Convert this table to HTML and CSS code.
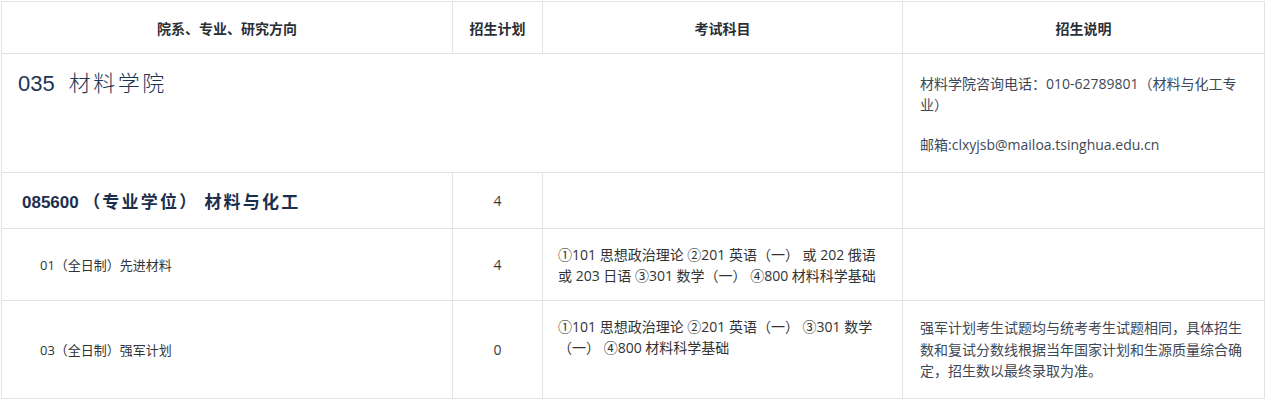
FILE: index.html
```html
<!DOCTYPE html>
<html lang="zh-CN">
<head>
<meta charset="utf-8">
<title>招生目录</title>
<link rel="stylesheet" href="styles.css">
</head>
<body>
<table class="catalog">
  <colgroup>
    <col class="c-name">
    <col class="c-plan">
    <col class="c-exam">
    <col class="c-note">
  </colgroup>
  <thead>
    <tr class="row-head">
      <th>院系、专业、研究方向</th>
      <th>招生计划</th>
      <th>考试科目</th>
      <th>招生说明</th>
    </tr>
  </thead>
  <tbody>
    <tr class="row-dept">
      <td colspan="3" class="dept"><span class="dept-code">035</span><span class="dept-name">材料学院</span></td>
      <td class="note note-top">
        <p>材料学院咨询电话：010-62789801（材料与化工专业）</p>
        <p>邮箱:clxyjsb@mailoa.tsinghua.edu.cn</p>
      </td>
    </tr>
    <tr class="row-major">
      <td class="major"><span class="major-code">085600</span> <span class="major-name">（专业学位） 材料与化工</span></td>
      <td class="plan">4</td>
      <td class="exam"></td>
      <td class="note"></td>
    </tr>
    <tr class="row-dir1">
      <td class="dir">01（全日制）先进材料</td>
      <td class="plan">4</td>
      <td class="exam">①101 思想政治理论 ②201 英语（一） 或 202 俄语 或 203 日语 ③301 数学（一） ④800 材料科学基础</td>
      <td class="note"></td>
    </tr>
    <tr class="row-dir3">
      <td class="dir">03（全日制）强军计划</td>
      <td class="plan">0</td>
      <td class="exam">①101 思想政治理论 ②201 英语（一） ③301 数学（一） ④800 材料科学基础</td>
      <td class="note">强军计划考生试题均与统考考生试题相同，具体招生数和复试分数线根据当年国家计划和生源质量综合确定，招生数以最终录取为准。</td>
    </tr>
  </tbody>
</table>
</body>
</html>
```

FILE: styles.css
```css
html, body {
  margin: 0;
  padding: 0;
  background: #ffffff;
}

body {
  font-family: "Open Sans", "Noto Sans CJK SC", sans-serif;
  color: #333333;
}

.catalog {
  border-collapse: collapse;
  table-layout: fixed;
  width: 1263px;
  margin: 1px 0 0 1px;
}

.c-name { width: 451px; }
.c-plan { width: 90px; }
.c-exam { width: 360px; }
.c-note { width: 362px; }

.catalog th,
.catalog td {
  border: 1px solid #e0e3e8;
  padding: 0;
}

.row-head { height: 52px; }
.row-dept { height: 119px; }
.row-major { height: 56px; }
.row-dir1 { height: 72px; }
.row-dir3 { height: 98px; }

.catalog th {
  font-size: 14px;
  font-weight: bold;
  color: #2b2f36;
  text-align: center;
  vertical-align: middle;
}

.dept {
  vertical-align: top;
  padding: 12px 16px 0 16px !important;
  color: #1a3556;
  line-height: 30px;
}

.dept-code {
  font-family: "Liberation Sans", sans-serif;
  font-size: 22px;
  margin-right: 14px;
}

.dept-name {
  font-family: "Noto Sans CJK SC", sans-serif;
  font-size: 22px;
  font-weight: 300;
  letter-spacing: 2.5px;
}

.note {
  font-size: 14px;
  line-height: 21.5px;
  color: #3e4856;
  vertical-align: middle;
  padding: 0 18px 0 17px !important;
}

.note-top {
  vertical-align: top;
  padding-top: 20px !important;
  line-height: 20.5px;
}

.note p {
  margin: 0 0 20px 0;
}

.note p:last-child {
  margin-bottom: 0;
}

.major {
  vertical-align: middle;
  padding-left: 20px !important;
  color: #1c2f4d;
  font-weight: bold;
  font-size: 17px;
}

.major-code {
  font-family: "Liberation Sans", sans-serif;
}

.major-name {
  font-family: "Noto Sans CJK SC", sans-serif;
  letter-spacing: 2.2px;
}

.plan {
  text-align: center;
  vertical-align: middle;
  font-size: 14px;
  color: #3a3a3a;
}

.dir {
  vertical-align: middle;
  padding-left: 38px !important;
  font-size: 13px;
  color: #333333;
}

.exam {
  vertical-align: top;
  padding: 15px 14px 0 15px !important;
  font-size: 14px;
  line-height: 21px;
  color: #333333;
}
```
